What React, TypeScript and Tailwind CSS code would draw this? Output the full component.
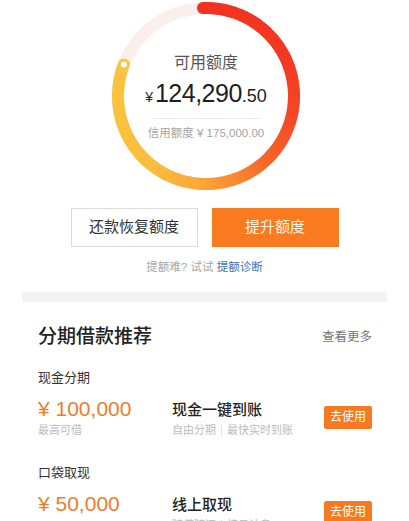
import React from 'react';

const CX = 96;
const CY = 96;
const R = 88;
const START = -2;
const END = 291;

// colour stops along the ring, by angle clockwise from the top
const stops: [number, [number, number, number]][] = [
  [0, [242, 50, 32]],
  [60, [242, 56, 34]],
  [100, [244, 70, 36]],
  [135, [246, 100, 41]],
  [160, [249, 136, 46]],
  [185, [251, 170, 54]],
  [220, [251, 190, 60]],
  [291, [248, 197, 64]],
];

const colorAt = (a: number) => {
  for (let i = 0; i < stops.length - 1; i++) {
    const [a0, c0] = stops[i];
    const [a1, c1] = stops[i + 1];
    if (a <= a1) {
      const t = Math.max(0, (a - a0) / (a1 - a0));
      const c = c0.map((v, k) => Math.round(v + (c1[k] - v) * t));
      return `rgb(${c[0]},${c[1]},${c[2]})`;
    }
  }
  const c = stops[stops.length - 1][1];
  return `rgb(${c[0]},${c[1]},${c[2]})`;
};

const pt = (deg: number) => {
  const r = (deg * Math.PI) / 180;
  return [CX + R * Math.sin(r), CY - R * Math.cos(r)];
};

const CreditRing: React.FC = () => {
  const segs = [];
  for (let a = START; a < END; a += 2) {
    const b = Math.min(a + 2.4, END);
    const [x0, y0] = pt(a);
    const [x1, y1] = pt(b);
    segs.push(
      <path
        key={a}
        d={`M ${x0} ${y0} A ${R} ${R} 0 0 1 ${x1} ${y1}`}
        stroke={colorAt(a)}
        strokeWidth={12}
        fill="none"
      />
    );
  }
  const [sx, sy] = pt(START);
  const [ex, ey] = pt(END);
  return (
    <svg width="192" height="192" viewBox="0 0 192 192">
      <circle cx={CX} cy={CY} r={R} stroke="#fbefeb" strokeWidth={12} fill="none" />
      {segs}
      <circle cx={sx} cy={sy} r={6} fill={colorAt(0)} />
      <circle cx={ex} cy={ey} r={6} fill={colorAt(END)} />
      <circle cx={ex} cy={ey} r={3} fill="#ffffff" />
    </svg>
  );
};

interface LoanItemProps {
  label: string;
  amount: string;
  amountNote?: string;
  title: string;
  tags: string[];
  gap: string;
}

const LoanItem: React.FC<LoanItemProps> = ({ label, amount, amountNote, title, tags, gap }) => (
  <div className={gap}>
    <div className="text-[13px] leading-[16px] text-[#333]">{label}</div>
    <div className="flex items-start mt-[10px]">
      <div className="w-[134px]">
        <div className="text-[21px] leading-[26px] text-[#ef7d26]">{amount}</div>
        {amountNote && (
          <div className="mt-[1px] text-[11px] leading-[14px] text-[#bcbcbc]">{amountNote}</div>
        )}
      </div>
      <div className="flex-1 mt-[4px]">
        <div className="text-[15px] leading-[20px] font-medium text-[#222]">{title}</div>
        <div className="mt-[3px] flex items-center text-[11px] leading-[14px] text-[#bcbcbc]">
          <span>{tags[0]}</span>
          <span className="mx-[5px] h-[11px] w-px bg-[#e2e2e2]" />
          <span>{tags[1]}</span>
        </div>
      </div>
      <button className="mt-[10px] w-[48px] h-[23px] rounded-[2px] bg-[#f77a22] text-white text-[12px] leading-[23px]">
        去使用
      </button>
    </div>
  </div>
);

const App: React.FC = () => {
  return (
    <div className="w-[409px] h-[521px] overflow-hidden bg-white font-['Liberation_Sans','Noto_Sans_CJK_SC',sans-serif]">
      {/* Credit ring */}
      <div className="relative w-[192px] h-[192px] ml-[110px]">
        <CreditRing />
        <div className="absolute inset-0 flex flex-col items-center pt-[54px]">
          <div className="text-[16px] leading-[18px] text-[#555]">可用额度</div>
          <div className="mt-[6px] flex items-baseline leading-[30px] text-[#1f1f1f]">
            <span className="text-[14px] mr-[2px]">¥</span>
            <span className="text-[25px] tracking-[-0.5px]">124,290</span>
            <span className="text-[18px]">.50</span>
          </div>
          <div className="mt-[6px] w-[110px] h-px bg-[#ededed]" />
          <div className="mt-[7px] text-[11.5px] leading-[14px] text-[#a3a3a3]">信用额度 ¥ 175,000.00</div>
        </div>
      </div>

      {/* Actions */}
      <div className="mt-[16px] flex justify-center gap-[14px]">
        <button className="w-[127px] h-[39px] border border-[#dcdcdc] bg-white text-[15px] text-[#333]">
          还款恢复额度
        </button>
        <button className="w-[127px] h-[39px] bg-[#f97a1f] text-[15px] text-[#fff3e6]">
          提升额度
        </button>
      </div>
      <div className="mt-[13px] text-center text-[11.5px] leading-[14px] text-[#a8a8a8]">
        提额难? 试试 <span className="text-[#3a72b4]">提额诊断</span>
      </div>

      <div className="mt-[18px] mx-[22px] h-[10px] bg-[#f3f3f3]" />

      {/* Recommendations */}
      <div className="pl-[38px] pr-[37px]">
        <div className="mt-[23px] flex items-center justify-between">
          <div className="text-[19px] leading-[24px] font-medium text-[#222]">分期借款推荐</div>
          <div className="text-[12.5px] text-[#777]">查看更多</div>
        </div>
        <LoanItem
          gap="mt-[21px]"
          label="现金分期"
          amount="¥ 100,000"
          amountNote="最高可借"
          title="现金一键到账"
          tags={['自由分期', '最快实时到账']}
        />
        <LoanItem
          gap="mt-[28px]"
          label="口袋取现"
          amount="¥ 50,000"
          title="线上取现"
          tags={['随借随还', '按日计息']}
        />
      </div>
    </div>
  );
};

export default App;
